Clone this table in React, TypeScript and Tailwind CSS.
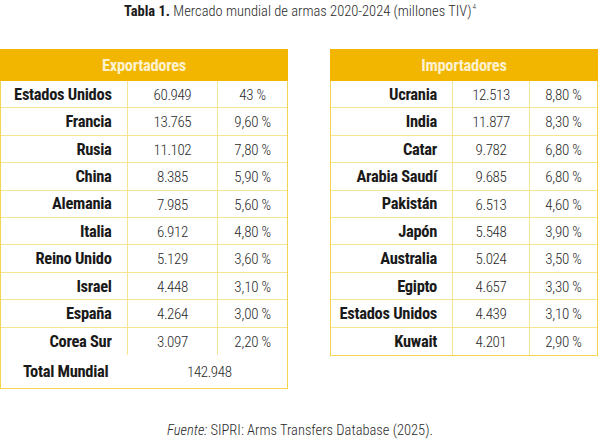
import React from "react";

const FONT = '"Roboto Condensed", "Liberation Sans Narrow", "DejaVu Sans Condensed", "Arial Narrow", Roboto, sans-serif';

const exp: [string, string, string][] = [
  ["Estados Unidos", "60.949", "43 %"],
  ["Francia", "13.765", "9,60 %"],
  ["Rusia", "11.102", "7,80 %"],
  ["China", "8.385", "5,90 %"],
  ["Alemania", "7.985", "5,60 %"],
  ["Italia", "6.912", "4,80 %"],
  ["Reino Unido", "5.129", "3,60 %"],
  ["Israel", "4.448", "3,10 %"],
  ["España", "4.264", "3,00 %"],
  ["Corea Sur", "3.097", "2,20 %"],
];

const imp: [string, string, string][] = [
  ["Ucrania", "12.513", "8,80 %"],
  ["India", "11.877", "8,30 %"],
  ["Catar", "9.782", "6,80 %"],
  ["Arabia Saudí", "9.685", "6,80 %"],
  ["Pakistán", "6.513", "4,60 %"],
  ["Japón", "5.548", "3,90 %"],
  ["Australia", "5.024", "3,50 %"],
  ["Egipto", "4.657", "3,30 %"],
  ["Estados Unidos", "4.439", "3,10 %"],
  ["Kuwait", "4.201", "2,90 %"],
];

function Row({
  r,
  w,
  last,
}: {
  r: [string, string, string];
  w: [string, string, string];
  last: boolean;
}) {
  return (
    <div className={`flex h-[27.4px] ${last ? "" : "border-b border-[#f6e48e]"}`}>
      <div className={`${w[0]} flex items-center justify-end pr-[15px] pt-[2px] text-[16.5px] tracking-[-0.3px] font-bold text-[#1a1a1a]`}>
        {r[0]}
      </div>
      <div className={`${w[1]} flex items-center justify-center pt-[2px] border-l border-[#f6e48e] text-[15px] tracking-[-0.4px] font-light text-[#2a2a2a]`}>
        {r[1]}
      </div>
      <div className={`${w[2]} flex items-center justify-center pt-[2px] border-l border-[#f6e48e] text-[15px] tracking-[-0.2px] font-light text-[#2a2a2a]`}>
        {r[2]}
      </div>
    </div>
  );
}

export default function App() {
  return (
    <div
      className="w-[600px] h-[444px] bg-white flex flex-col text-[#1a1a1a]"
      style={{ fontFamily: FONT }}
    >
      <div className="h-[20px] pt-[3px] flex items-center justify-center text-[14.5px] leading-[16px] text-[#2a2a2a]">
        <span className="font-bold text-[#1a1a1a]">Tabla 1.</span>
        <span className="font-light">&nbsp;Mercado mundial de armas 2020-2024 (millones TIV)</span>
        <span className="font-light text-[7px] leading-[7px] self-start mt-[1px] ml-px">4</span>
      </div>

      <div className="mt-[29px] flex items-start">
        {/* Exportadores */}
        <div className="w-[288px] border border-t-0 border-[#f3d54f] bg-white">
          <div className="h-[32px] pt-[3px] bg-[#f2b600] flex items-center justify-center text-[16.5px] tracking-[-0.3px] font-bold text-[#fdf1cf] -mx-px">
            Exportadores
          </div>
          {exp.map((r, i) => (
            <Row key={r[0]} r={r} w={["w-[126px]", "w-[91px]", "w-[70px]"]} last={i === exp.length - 1} />
          ))}
          <div className="flex h-[33px] items-center pt-[2px]">
            <div className="pl-[22px] w-[126px] text-[16.5px] tracking-[-0.3px] font-bold text-[#1a1a1a]">Total Mundial</div>
            <div className="w-[91px] text-center text-[15px] tracking-[-0.4px] font-light text-[#2a2a2a] pl-[60px] whitespace-nowrap">
              142.948
            </div>
          </div>
        </div>

        {/* Importadores */}
        <div className="ml-[42px] w-[268px] border border-t-0 border-[#f3d54f] bg-white">
          <div className="h-[32px] pt-[3px] bg-[#f2b600] flex items-center justify-center text-[16.5px] tracking-[-0.3px] font-bold text-[#fdf1cf] -mx-px">
            Importadores
          </div>
          {imp.map((r, i) => (
            <Row key={r[0]} r={r} w={["w-[121px]", "w-[77px]", "w-[68px]"]} last={i === imp.length - 1} />
          ))}
        </div>
      </div>

      <div className="mt-auto mb-[3px] h-[20px] flex items-center justify-center text-[14.5px] font-light text-[#2a2a2a]">
        <span className="italic">Fuente:</span>
        <span>&nbsp;SIPRI: Arms Transfers Database (2025).</span>
      </div>
    </div>
  );
}
